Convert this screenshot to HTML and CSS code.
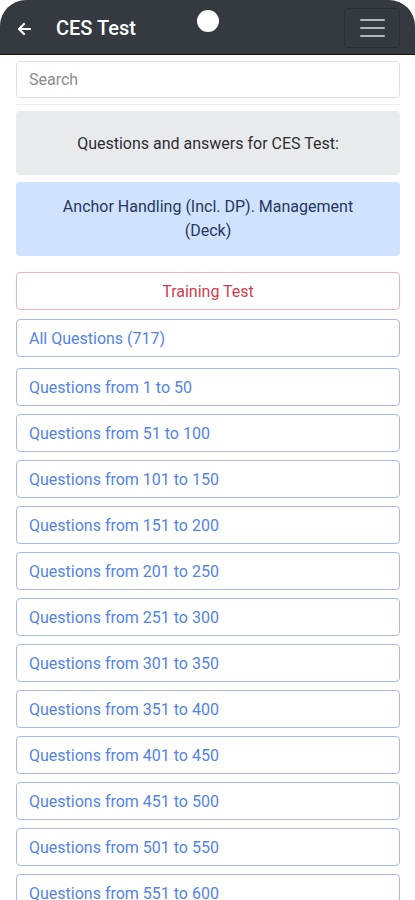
FILE: index.html
```html
<!DOCTYPE html>
<html>
    <head>
        <link rel="stylesheet" href="styles.css">
    </head>
    <body>
        <div class="topbar">
            <svg class="back" width="16" height="16" viewBox="0 0 16 16">
                <path d="M14 8H3M8 3L3 8l5 5" fill="none" stroke="#ffffff" stroke-width="2.2" stroke-linecap="round" stroke-linejoin="round"/>
            </svg>
            <h1>CES Test</h1>
            <div class="camera"></div>
            <div class="menubtn">
                <span></span><span></span><span></span>
            </div>
        </div>
        <div class="content">
            <input class="search" type="text" placeholder="Search">
            <hr class="line">
            <div class="intro">Questions and answers for CES Test:</div>
            <div class="topic">Anchor Handling (Incl. DP). Management (Deck)</div>
            <div class="btn training">Training Test</div>
            <div class="btn all">All Questions (717)</div>
            <div class="btn">Questions from 1 to 50</div>
            <div class="btn">Questions from 51 to 100</div>
            <div class="btn">Questions from 101 to 150</div>
            <div class="btn">Questions from 151 to 200</div>
            <div class="btn">Questions from 201 to 250</div>
            <div class="btn">Questions from 251 to 300</div>
            <div class="btn">Questions from 301 to 350</div>
            <div class="btn">Questions from 351 to 400</div>
            <div class="btn">Questions from 401 to 450</div>
            <div class="btn">Questions from 451 to 500</div>
            <div class="btn">Questions from 501 to 550</div>
            <div class="btn">Questions from 551 to 600</div>
        </div>
    </body>
</html>
```
FILE: styles.css
```css
body {
    margin: 0;
    background-color: #ffffff;
    font-family: 'Roboto', sans-serif;
    overflow: hidden;
}
.topbar {
    position: relative;
    display: flex;
    align-items: center;
    height: 54px;
    background-color: #343a40;
    border-bottom: 1px solid #111111;
    border-radius: 26px 26px 0 0;
    padding: 0 15px 0 16px;
}
.back {
    margin-top: 4px;
}
h1 {
    color: #ffffff;
    font-size: 20px;
    font-weight: 500;
    margin: 2px 0 0 24px;
}
.camera {
    position: absolute;
    left: 197px;
    top: 10px;
    width: 22px;
    height: 22px;
    border-radius: 50%;
    background-color: #ffffff;
}
.menubtn {
    margin-left: auto;
    width: 56px;
    height: 40px;
    box-sizing: border-box;
    border: 1px solid #2b3035;
    border-radius: 4px;
    display: flex;
    flex-direction: column;
    justify-content: center;
    align-items: center;
    gap: 6px;
    margin-top: 1px;
}
.menubtn span {
    display: block;
    width: 25px;
    height: 2px;
    background-color: #b4b7ba;
    border-radius: 1px;
}
.content {
    padding: 6px 15px 0 16px;
}
.search {
    display: block;
    width: 100%;
    height: 37px;
    box-sizing: border-box;
    border: 1px solid #dee2e6;
    border-radius: 4px;
    padding: 0 12px;
    font-family: 'Roboto', sans-serif;
    font-size: 16px;
    color: #333333;
}
.search::placeholder {
    color: #8a8d91;
}
hr.line {
    border: 0;
    border-top: 1px solid #eeeeee;
    margin: 6px 0 6px 0;
}
.intro {
    background-color: #e9eaec;
    border-radius: 4px;
    height: 64px;
    display: flex;
    align-items: center;
    justify-content: center;
    color: #2c2f33;
    font-size: 16px;
}
.topic {
    margin-top: 7px;
    background-color: #cfe2ff;
    border-radius: 4px;
    height: 74px;
    box-sizing: border-box;
    padding: 13px 40px 0;
    text-align: center;
    color: #27375e;
    font-size: 16px;
    line-height: 24px;
}
.btn {
    height: 38px;
    box-sizing: border-box;
    border: 1px solid #a9b9f6;
    border-radius: 4px;
    padding: 0 12px;
    display: flex;
    align-items: center;
    color: #5383ec;
    font-size: 16px;
    margin-bottom: 8px;
}
.training {
    margin-top: 16px;
    margin-bottom: 9px;
    justify-content: center;
    border-color: #eeb2b8;
    color: #cf3e50;
}
.all {
    margin-bottom: 11px;
}
```
